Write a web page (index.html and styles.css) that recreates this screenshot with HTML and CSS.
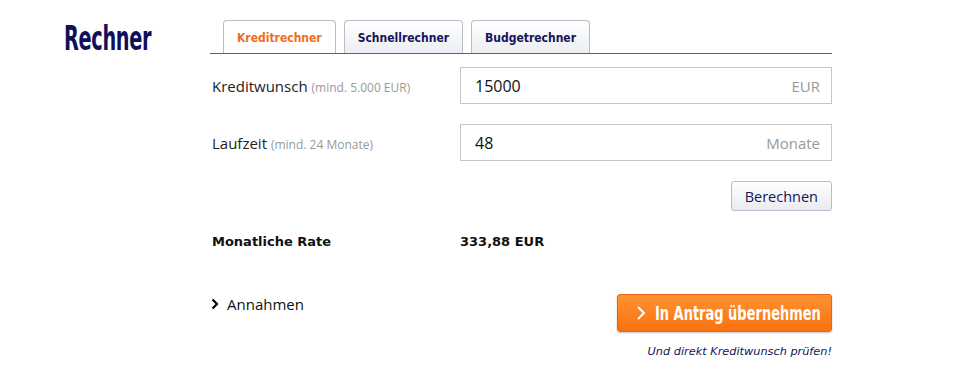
FILE: index.html
```html
<!DOCTYPE html>
<html lang="de">
<head>
    <meta charset="UTF-8">
    <title>Rechner</title>
    <link rel="stylesheet" href="styles.css">
</head>
<body>
    <div class="page">
        <div class="side">
            <h1 class="title">Rechner</h1>
        </div>

        <div class="calc">
            <!-- Tabs -->
            <ul class="tabs">
                <li class="tab active">Kreditrechner</li>
                <li class="tab">Schnellrechner</li>
                <li class="tab">Budgetrechner</li>
            </ul>

            <!-- Kreditwunsch -->
            <div class="form-row">
                <label class="label" for="amount">Kreditwunsch <small>(mind. 5.000 EUR)</small></label>
                <div class="field">
                    <input type="text" id="amount" value="15000">
                    <span class="unit">EUR</span>
                </div>
            </div>

            <!-- Laufzeit -->
            <div class="form-row">
                <label class="label" for="months">Laufzeit <small>(mind. 24 Monate)</small></label>
                <div class="field">
                    <input type="text" id="months" value="48">
                    <span class="unit">Monate</span>
                </div>
            </div>

            <div class="actions">
                <button class="btn-calc">Berechnen</button>
            </div>

            <div class="result">
                <span class="result-label">Monatliche Rate</span>
                <span class="result-value">333,88 EUR</span>
            </div>

            <div class="footer">
                <a class="toggle" href="#">
                    <svg width="8" height="12" viewBox="0 0 8 12"><path d="M1.5 1.5 L6 6 L1.5 10.5" fill="none" stroke="#000" stroke-width="2.2"/></svg>
                    Annahmen
                </a>
                <div class="apply">
                    <button class="btn-apply">
                        <svg width="10" height="16" viewBox="0 0 10 16"><path d="M2 2 L8 8 L2 14" fill="none" stroke="#fff" stroke-width="2"/></svg>
                        <span>In Antrag übernehmen</span>
                    </button>
                    <p class="hint">Und direkt Kreditwunsch prüfen!</p>
                </div>
            </div>
        </div>
    </div>
</body>
</html>
```

FILE: styles.css
```css
* {
    box-sizing: border-box;
}

body {
    margin: 0;
    font-family: "Open Sans", Arial, sans-serif;
    background: #fff;
    color: #222;
}

.page {
    display: flex;
    padding: 20px 0 0 64px;
}

.side {
    width: 146px;
}

.title {
    display: inline-block;
    margin: 0;
    font-family: "DejaVu Sans", sans-serif;
    font-stretch: condensed;
    font-size: 33px;
    font-weight: bold;
    line-height: 38px;
    color: #10105a;
    letter-spacing: -0.5px;
    transform: scaleX(0.65);
    transform-origin: left center;
}

.calc {
    width: 622px;
}

.tabs {
    display: flex;
    align-items: flex-end;
    gap: 8px;
    margin: 0;
    padding: 0 0 0 13px;
    list-style: none;
    border-bottom: 1px solid #5a5f73;
    height: 34px;
}

.tab {
    height: 33px;
    padding: 0 13px;
    line-height: 34px;
    font-family: "DejaVu Sans", Verdana, sans-serif;
    font-stretch: condensed;
    font-size: 12px;
    font-weight: bold;
    color: #14145a;
    border: 1px solid #b9bdc9;
    border-bottom: none;
    border-radius: 4px 4px 0 0;
    background: linear-gradient(#ffffff, #eceef3);
}

.tab.active {
    color: #f26d1e;
    background: #fff;
}

.form-row {
    display: flex;
    align-items: center;
    margin-top: 13px;
}

.form-row + .form-row {
    margin-top: 20px;
}

.label {
    width: 250px;
    padding-left: 2px;
    font-size: 15px;
    color: #222;
}

.label small {
    font-size: 12px;
    color: #999;
}

.field {
    position: relative;
    width: 372px;
}

.field input {
    width: 100%;
    height: 37px;
    padding: 0 14px;
    border: 1px solid #c3c6d0;
    font-family: "Open Sans", Arial, sans-serif;
    font-size: 16px;
    color: #111;
}

.unit {
    position: absolute;
    right: 12px;
    top: 9px;
    font-size: 15px;
    color: #999;
}

.actions {
    display: flex;
    justify-content: flex-end;
    margin-top: 20px;
}

.btn-calc {
    height: 30px;
    padding: 0 13px;
    font-family: "Open Sans", Arial, sans-serif;
    font-size: 14.5px;
    color: #14145a;
    border: 1px solid #b9bdc9;
    border-radius: 3px;
    background: linear-gradient(#ffffff, #e9ebf1);
}

.result {
    display: flex;
    margin-top: 23px;
    padding-left: 2px;
    font-family: "DejaVu Sans", Verdana, sans-serif;
    font-size: 13px;
    font-weight: bold;
    color: #111;
}

.result-label {
    width: 248px;
}

.footer {
    display: flex;
    justify-content: space-between;
    align-items: flex-start;
    margin-top: 45px;
}

.toggle {
    display: flex;
    align-items: center;
    gap: 8px;
    padding-left: 1px;
    font-size: 15px;
    color: #111;
    text-decoration: none;
}

.apply {
    text-align: right;
}

.btn-apply {
    display: inline-flex;
    align-items: center;
    gap: 9px;
    height: 38px;
    width: 215px;
    padding: 0 0 0 18px;
    overflow: hidden;
    font-family: "DejaVu Sans", sans-serif;
    font-stretch: condensed;
    font-size: 19px;
    font-weight: bold;
    color: #fff;
    border: 1px solid #e8640f;
    border-radius: 3px;
    background: linear-gradient(#ff9233, #f8720f);
    box-shadow: 0 1px 2px rgba(0, 0, 0, 0.25);
    white-space: nowrap;
}

.btn-apply svg {
    flex-shrink: 0;
}

.btn-apply span {
    display: inline-block;
    transform: scaleX(0.76);
    transform-origin: left center;
}

.hint {
    margin: 13px 0 0;
    font-family: "DejaVu Sans", Verdana, sans-serif;
    font-size: 11.3px;
    font-style: italic;
    color: #14145a;
}
```
